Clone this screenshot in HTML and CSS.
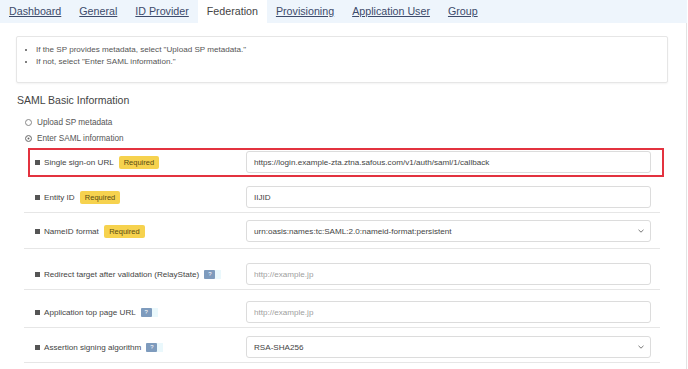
FILE: index.html
```html
<!DOCTYPE html>
<html lang="en">
<head>
    <meta charset="UTF-8">
    <meta name="viewport" content="width=device-width, initial-scale=1.0">
    <title>Federation - SAML Basic Information</title>
    <link rel="stylesheet" href="styles.css">
</head>
<body>
    <div class="page">
        <nav class="tabs">
            <a class="tab" href="#">Dashboard</a>
            <a class="tab" href="#">General</a>
            <a class="tab" href="#">ID Provider</a>
            <span class="tab active">Federation</span>
            <a class="tab" href="#">Provisioning</a>
            <a class="tab" href="#">Application User</a>
            <a class="tab" href="#">Group</a>
        </nav>

        <div class="content">
            <div class="notice">
                <ul>
                    <li>If the SP provides metadata, select "Upload SP metadata."</li>
                    <li>If not, select "Enter SAML information."</li>
                </ul>
            </div>

            <h2 class="section-title">SAML Basic Information</h2>

            <div class="radio-group">
                <label class="radio"><span class="radio-mark"></span>Upload SP metadata</label>
                <label class="radio checked"><span class="radio-mark"></span>Enter SAML information</label>
            </div>

            <div class="form-rows">
                <div class="form-row highlight">
                    <div class="form-label"><span class="mark"></span>Single sign-on URL <span class="badge-required">Required</span></div>
                    <input class="form-input" type="text" value="https://login.example-zta.ztna.safous.com/v1/auth/saml/1/callback">
                </div>

                <div class="form-row pad-first">
                    <div class="form-label"><span class="mark"></span>Entity ID <span class="badge-required">Required</span></div>
                    <input class="form-input" type="text" value="IIJID">
                </div>

                <div class="form-row pad-sm">
                    <div class="form-label"><span class="mark"></span>NameID format <span class="badge-required">Required</span></div>
                    <div class="select-wrap">
                        <select class="form-input">
                            <option>urn:oasis:names:tc:SAML:2.0:nameid-format:persistent</option>
                        </select>
                        <svg class="chevron" width="6" height="4" viewBox="0 0 6 4"><path d="M0.5 0.8 L3 3.2 L5.5 0.8" fill="none" stroke="#777" stroke-width="1"/></svg>
                    </div>
                </div>

                <div class="form-row pad-lg">
                    <div class="form-label"><span class="mark"></span>Redirect target after validation (RelayState) <span class="help"><span class="help-badge">?</span></span></div>
                    <input class="form-input" type="text" placeholder="http://example.jp">
                </div>

                <div class="form-row pad-md">
                    <div class="form-label"><span class="mark"></span>Application top page URL <span class="help"><span class="help-badge">?</span></span></div>
                    <input class="form-input" type="text" placeholder="http://example.jp">
                </div>

                <div class="form-row pad-sm">
                    <div class="form-label"><span class="mark"></span>Assertion signing algorithm <span class="help"><span class="help-badge">?</span></span></div>
                    <div class="select-wrap">
                        <select class="form-input">
                            <option>RSA-SHA256</option>
                        </select>
                        <svg class="chevron" width="6" height="4" viewBox="0 0 6 4"><path d="M0.5 0.8 L3 3.2 L5.5 0.8" fill="none" stroke="#777" stroke-width="1"/></svg>
                    </div>
                </div>
            </div>
        </div>
    </div>
</body>
</html>
```

FILE: styles.css
```css
body {
    font-family: "Liberation Sans", Arial, Helvetica, sans-serif;
    color: #444;
    margin: 0;
    background-color: white;
}
.page {
    width: 687px;
    height: 369px;
    overflow: hidden;
}
.tabs {
    display: flex;
    height: 23px;
    background-color: #eef5fc;
}
.tab {
    padding: 0 9px;
    line-height: 23px;
    font-size: 10.7px;
    color: #3d4b6b;
    text-decoration: underline;
}
.tab.active {
    background-color: white;
    color: #444;
    text-decoration: none;
}
.content {
    height: 346px;
    border-right: 1px solid #e3e3e3;
    padding-top: 13px;
    box-sizing: border-box;
}
.notice {
    margin: 0 18px 0 16px;
    height: 47px;
    box-sizing: border-box;
    border: 1px solid #e6e6e6;
    border-radius: 2px;
    box-shadow: 0 1px 2px rgba(0,0,0,0.05);
    padding-top: 7px;
}
.notice ul {
    margin: 0;
    padding-left: 19px;
    font-size: 8.1px;
    line-height: 12px;
    color: #555;
}
.section-title {
    margin: 10px 0 0 17px;
    font-size: 10.5px;
    line-height: 14px;
    font-weight: normal;
    color: #444;
}
.radio-group {
    margin-top: 7px;
    padding-left: 25px;
}
.radio {
    display: flex;
    align-items: center;
    height: 16px;
    font-size: 8.2px;
    color: #555;
}
.radio-mark {
    width: 7px;
    height: 7px;
    box-sizing: border-box;
    border: 1px solid #888;
    border-radius: 50%;
    margin-right: 5px;
    background-color: white;
}
.radio.checked .radio-mark {
    box-shadow: inset 0 0 0 1.5px white;
    background-color: #666;
}
.form-rows {
    margin: 2px 0 0 24px;
    width: 636px;
}
.form-row {
    display: flex;
    align-items: center;
    padding: 8px 9px 4px 11px;
    border-bottom: 1px solid #e6e6e6;
}
.form-row.highlight {
    margin: 0 -4px 0 4px;
    padding: 1px 11px 2px 5px;
    border: 2px solid #e3323f;
}
.form-row.pad-first { padding-top: 9px; }
.form-row.pad-sm { padding-top: 7px; padding-bottom: 6px; }
.form-row.pad-md { padding-top: 11px; }
.form-row.pad-lg { padding-top: 14px; }
.form-row:last-child { padding-top: 8px; padding-bottom: 4px; }
.form-label {
    flex: 1;
    display: flex;
    align-items: center;
    font-size: 8.1px;
    color: #444;
    white-space: pre;
}
.mark {
    width: 5px;
    height: 5px;
    background-color: #555;
    margin-right: 4px;
}
.badge-required {
    margin-left: 3px;
    padding: 0 5px;
    height: 13px;
    line-height: 13px;
    font-size: 7.5px;
    border-radius: 2px;
    background-color: #f6d24e;
    color: #5b4c12;
}
.help {
    margin-left: 3px;
    padding-right: 6px;
    background-color: #eaf8fc;
}
.help-badge {
    display: block;
    width: 11px;
    height: 9px;
    line-height: 9px;
    border-radius: 1px;
    background-color: #7e9bbd;
    color: white;
    font-size: 6px;
    text-align: center;
}
.form-input {
    width: 405px;
    height: 22px;
    box-sizing: border-box;
    margin: 0;
    padding: 0 7px;
    border: 1px solid #dcdcdc;
    border-radius: 3px;
    background-color: white;
    font-family: inherit;
    font-size: 8.1px;
    color: #444;
    outline: none;
}
.form-input::placeholder {
    color: #a0a0a0;
}
select.form-input {
    appearance: none;
}
.select-wrap {
    position: relative;
    display: flex;
}
.chevron {
    position: absolute;
    right: 7px;
    top: 9px;
}
```
